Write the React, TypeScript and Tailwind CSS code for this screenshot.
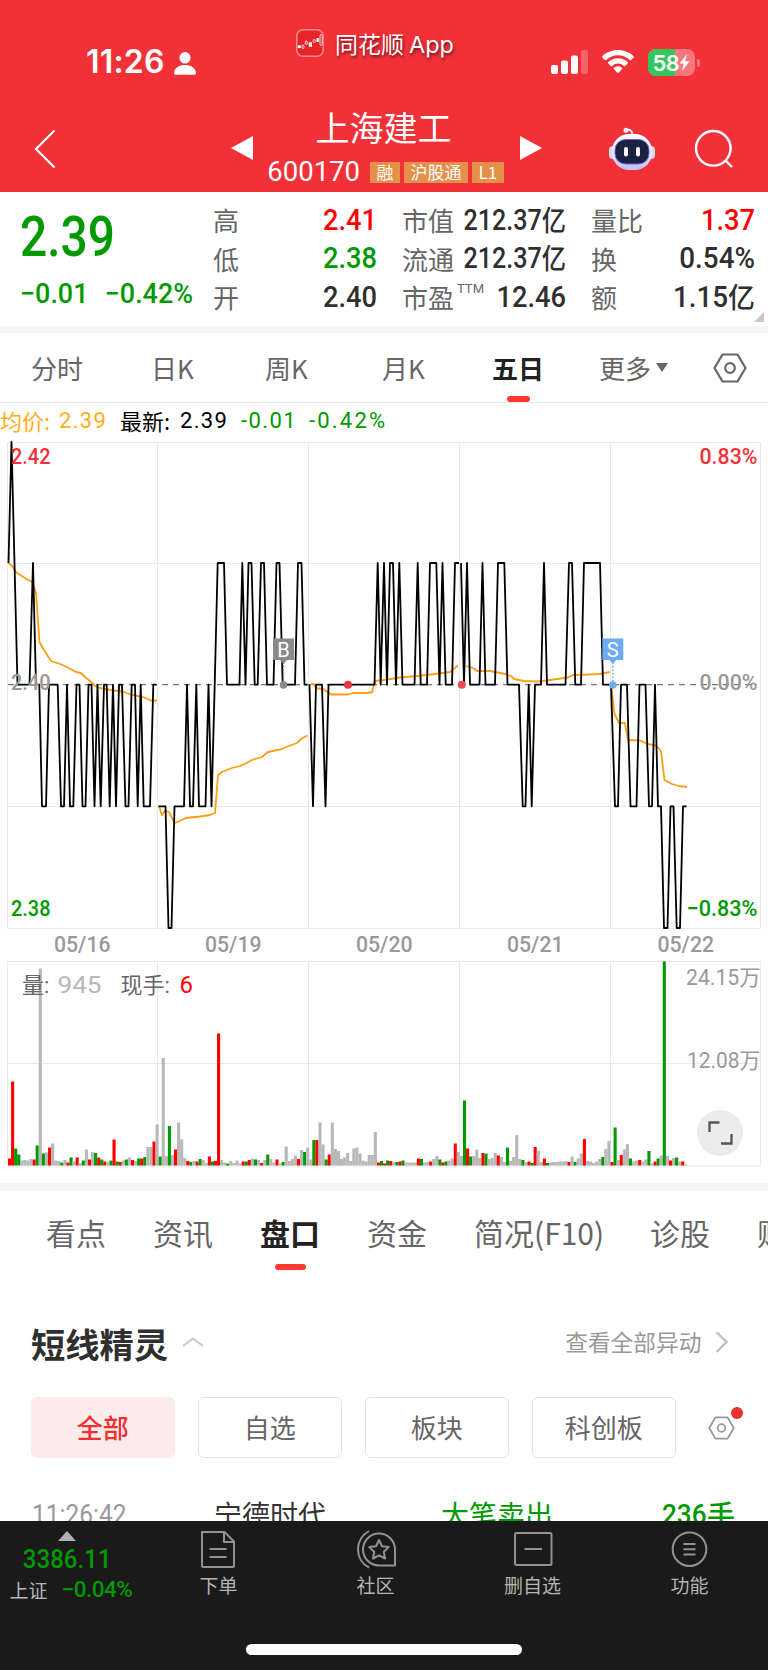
import type { ReactNode } from 'react';

type Point = [number, number];

// y position of each price gridline
const LEVELS: Record<string, number> = { a: 442, b: 563, c: 684.7, d: 806.3, e: 928 };

// each day: price level followed by x
const PRICE_DAYS = [
  'b8.5 a11.5 c17.5 c29.5 b33 c36 c39.3 d42 d46 c49 c57.7 d61 d64 c67 d70 d73.3 c76.5 c79.5 d82.5 d85.5 c88.5 c91.5 d94.5 c97.5 d100.7 c104 c106.7 d109.7 c113 d116 c119 c122 d125.5 d128.5 c131.7 c135 d137.7 c140.7 d143.7 d150 c153.3 c156.5',
  'd158.5 d165.5 e168.5 e171.5 d174.5 d184 c187 d190 d193 c196.3 d199 d205.5 c208.5 d211.5 c214.7 b217.7 b224 c227 c239.5 b242.3 c245.5 b248.5 b251.5 c254.7 c257.7 b261 b264 c267 c273.5 b276.5 b279.5 c282.7 c295 b298 b301.5 c304.5 c307.5',
  'c309.5 d313 c316 c322 d325.5 c328.5 c374.5 b377.7 c380.7 b384 c387 b390 b393 c396 b399.3 c402.5 c414.5 b417.7 c420.7 c427 b430 b436.3 c439.5 b442.5 c445.7 c452 b455 b459',
  'b461 c464 b467 c470 c479.5 b482.5 c485.5 c495 b498 b504.3 c507.5 c519 d522.7 d525.5 c528.7 d531.7 c535 c541 b544 c547 c565.5 b569 b572 c575.3 c581 b584 b600 c603 c611',
  'c611 d615 d618 c621 c627 d630.5 d636.5 c639.5 c645.5 d649 d652 c655 d658 d661 e664 e667.5 d670.5 d673.5 e676.7 e680 d683 d686.5',
];

const AVERAGE_DAYS = [
  '8.5,563 12,566 17,573 25,578 32,582 36,593 39.5,642 44,650 51,661 60,664 67,667 76,672 81,673 86,678 89,680 95,686 100,688 110,690 122,691.5 133,695 143,697 151,700.5 157,700.5',
  '159,806 162,815 165,811 169,812 172,818 175,823 186,818 200,816.5 210,815 215,813 218,775 222,772 227,770 232,768 240,766 247,763 252,760 262,757 268,752 282,749 286,747 297,743 301,739 307.5,735.5',
  '311,684 314,684 316,688 323,689 331,694.5 348,694.5 353,693 367,693 372,692 375,681 384,680 400,677.5 418,676 435,674 450,672 458,665.5',
  '466,666 474,668.5 477,671 490,671 505,674 511,676 514,679 524,681 538,681.5 550,680 568,677.5 573,675 590,674.5 600,674 610,672',
  '611,684 614.5,714 619,723 625,723 628,740 640,740.5 648,744 656,745.5 661,751 664.5,780 672,784 679,786 687,787',
];

// volume bars: r = up, g = down, n = flat, followed by the height
const VOLUMES =
  'r7 r84 g17 g11 n5 n5.5 n5 n6.5 r6 g20 n197 g12 n13 r18 n22 n5 n4.5 g3 n5.5 r3 g8 n4 r8 n2.5 g5 n16 r6 n13.5 g12.5 r8 g6 r4 n3.5 g5 r26 g4 r3.5 n5 g6 n8 r5.5 n4.5 g7 r7 g8.5 n18.5 n18.5 r24 n41 ' +
  'g9 n107.5 n9.5 g39.5 n10.5 r16 n43 n26 n7.5 r4.5 g3.5 n4.5 r4 g6.5 n5.5 n2.5 r9 g4 r4.5 r132 n5.5 n3 g2 n4.5 n2.5 n5 n2 r4 g4 r5.5 n7 g6 n5.5 r2.5 n5.5 g11 n6.5 n3 r6 n2 g3.5 n19 n4.5 n6.5 n10 r6.5 n15.5 g13.5 n18 ' +
  'n6 g25.5 r25.5 n43 n21 g6 r11 n43 n16.5 n14.5 n6.5 n8 n12.5 n4.5 n17 n18 n12 n5 n4 n10.5 n10.5 n33.5 r3 g4.5 r2 g5 r4.5 n3 g3.5 r4 g5 n3 n3 n3 n3 r7 g6.5 n3 n3.5 r4 n6.5 n9.5 g6 r3 g4 n5 n7 r22 n13.5 n9.5 ' +
  'g65 r17 g9 n9.5 n16 n7.5 r12.5 g12 n6.5 n7.5 n12.5 r10 n8.5 n3.5 g18 n4.5 n8.5 n30.5 n6.5 g5.5 n3.5 r4 g2.5 r18.5 n14.5 n3.5 r7 g2.5 n3 n3.5 n3.5 n4 n4 n4.5 r3.5 n9 g3.5 n7 n12 r26.5 n4.5 n4 n2.5 n4 n6.5 g8.5 n16.5 n24.5 ' +
  'r3.5 g38 n5.5 r10.5 n16 n21.5 g7 n4 n5 r5.5 n4 n6 g14.5 n2 r4 g7 n10 g204 n9.5 r5 n7.5 g8 n4 r4 n1';

const VOLUME_COLORS: Record<string, string> = { r: '#ff0000', g: '#009900', n: '#b8b8b8' };
const DAY_LINES = [157.5, 308.5, 459.5, 610.5];

const DATES = [
  { label: '05/16', x: 54 },
  { label: '05/19', x: 205 },
  { label: '05/20', x: 356 },
  { label: '05/21', x: 507 },
  { label: '05/22', x: 657.5 },
];

const parsePoint = (item: string): Point => [Number(item.slice(1)), LEVELS[item[0]]];

const Hexagon = ({ className }: { className: string }) => (
  <svg viewBox="0 0 34 30" className={className} fill="none" stroke="currentColor" strokeWidth="2.2" strokeLinejoin="round">
    <path d="M9.5 1.5h15L32.5 15l-8 13.5h-15L1.5 15z" />
    <circle cx="17" cy="15" r="4.8" />
  </svg>
);

const StatusBar = () => (
  <div className="flex h-[102px] text-white">
    <div className="flex w-[296px] items-start pl-[86px] pt-[46px]">
      <span className="w-[80px] font-[Inter] text-[32px] font-semibold leading-8 tracking-[0.2px]">11:26</span>
      <svg viewBox="0 0 22 23" className="ml-2 mt-[6px] h-[23px] w-[22px]" fill="currentColor">
        <ellipse cx="11" cy="5.8" rx="5.6" ry="5.8" />
        <path d="M0 20.5C1 15.5 5 13 11 13s10 2.5 11 7.5c0 1.5-.6 2.3-2 2.3H2c-1.4 0-2-.8-2-2.300z" />
      </svg>
    </div>
    <div className="flex w-[255px] items-start pt-[29px]">
      <svg viewBox="0 0 28 28" className="h-7 w-7">
        <rect x=".8" y=".8" width="26.4" height="26.4" rx="6" fill="#e8242b" stroke="#f58a8f" strokeWidth="1.5" />
        <g fill="#fff">
          <rect x="1.800" y="16.300" width="3" height="2.700" />
          <rect x="12.700" y="13.300" width="3.300" height="4.500" />
          <rect x="20.500" y="9" width="2.300" height="4" />
        </g>
        <g fill="none" stroke="#fff" strokeWidth=".8">
          <rect x="6" y="16" width="2" height="3.500" rx="1" />
          <rect x="9.200" y="12" width="2" height="3.500" rx="1" />
          <rect x="17.200" y="10.500" width="2" height="3" rx="1" />
          <rect x="24" y="5.500" width="2.200" height="11" rx="1" />
        </g>
      </svg>
      <span className="ml-[11px] text-[23px] leading-7 [text-shadow:1px_2px_3px_rgba(0,0,0,0.55)]">
        同花顺<span className="ml-[5px] font-[Inter] text-[23.5px]">App</span>
      </span>
    </div>
    <div className="flex items-start pt-[49px]">
      <svg viewBox="0 0 37 24" className="mt-[1px] h-6 w-[37px]" fill="currentColor">
        <rect x="0" y="15" width="7" height="9" rx="2" />
        <rect x="10" y="10.5" width="7" height="13.5" rx="2" />
        <rect x="20" y="5.5" width="7" height="18.5" rx="2" />
        <rect x="30" y="0" width="7" height="24" rx="2" opacity=".25" />
      </svg>
      <svg viewBox="0 0 32 24" className="ml-[14px] mt-[1px] h-6 w-8" fill="currentColor">
        <path d="M16 0c6 0 11.6 2.3 15.7 6.2.4.4.4.9 0 1.3l-2.5 2.5c-.4.4-.9.4-1.3 0C24.7 7 20.5 5.3 16 5.3S7.3 7 4.1 10c-.4.4-.9.4-1.3 0L.3 7.5c-.4-.4-.4-.9 0-1.3C4.4 2.3 10 0 16 0z" />
        <path d="M16 8.3c3.7 0 7.1 1.4 9.7 3.8.4.4.4.9 0 1.3l-2.5 2.5c-.4.4-.9.4-1.3 0a8.7 8.7 0 0 0-11.8 0c-.4.4-.9.4-1.3 0l-2.5-2.5c-.4-.4-.4-.9 0-1.3A14.3 14.3 0 0 1 16 8.3z" />
        <path d="M16 16.3c1.6 0 3 .6 4.1 1.5.4.4.4.9 0 1.3l-3.5 3.7c-.4.4-.8.4-1.2 0l-3.5-3.7c-.4-.4-.4-.9 0-1.3a6.3 6.3 0 0 1 4.1-1.5z" />
      </svg>
      <div className="relative ml-[14px] flex h-[27px] w-[47px] items-center justify-center overflow-hidden rounded-lg bg-[#f7777c]">
        <div className="absolute inset-y-0 left-0 w-[27px] bg-[#34c759]" />
        <span className="relative font-[Inter] text-[22px] font-semibold leading-none tracking-[-0.5px]">58</span>
        <svg viewBox="0 0 10 17" className="relative h-[17px] w-[11px]" fill="currentColor">
          <path d="M7.5 0 0 9.5h4.300L2.5 17 10 7.300H5.700z" />
        </svg>
      </div>
      <div className="ml-[2px] mt-[10px] h-2 w-[3px] rounded-r-full bg-[#f7777c]" />
    </div>
  </div>
);

const Robot = () => (
  <svg viewBox="0 0 46 44" className="h-[44px] w-[46px]">
    <defs>
      <linearGradient id="shell" x1="0" y1="0" x2="0" y2="1">
        <stop offset="0" stopColor="#ffffff" />
        <stop offset="0.6" stopColor="#e6e6fa" />
        <stop offset="1" stopColor="#bcbfee" />
      </linearGradient>
    </defs>
    <path d="M23 8c1-3-1-5-4-5.5" fill="none" stroke="#eceaff" strokeWidth="2" />
    <circle cx="17" cy="3.2" r="2.5" fill="#f3efff" />
    <rect x="0" y="19" width="8" height="13" rx="4" fill="#d5d7f6" />
    <rect x="38" y="19" width="8" height="13" rx="4" fill="#d5d7f6" />
    <rect x="3" y="7" width="40" height="36" rx="17" fill="url(#shell)" />
    <rect x="6" y="12.5" width="34" height="24.500" rx="10.5" fill="#1b2340" stroke="#6d5df0" strokeWidth="1" />
    <rect x="15" y="20" width="4" height="9.5" rx="2" fill="#fff" />
    <rect x="27" y="20" width="4" height="9.5" rx="2" fill="#fff" />
  </svg>
);

const Tag = ({ children }: { children: ReactNode }) => (
  <span className="flex h-[21px] items-center bg-[#e59049] px-[6.5px] pb-[2px] text-[17px] leading-none">{children}</span>
);

const TitleBar = () => (
  <div className="flex h-[90px] items-start text-white">
    <svg viewBox="0 0 22 40" className="ml-[34px] mt-[27px] h-10 w-[22px]" fill="none" stroke="currentColor" strokeWidth="2.2">
      <path d="M20.5 1.5 2 20l18.5 18.5" />
    </svg>
    <svg viewBox="0 0 22 24" className="ml-[175px] mt-[34px] h-6 w-[22px]" fill="currentColor">
      <path d="M22 0v24L0 12z" />
    </svg>
    <div className="-ml-[1px] mr-[1px] flex w-[267px] flex-col items-center">
      <h1 className="mr-[4px] mt-[5px] h-[44px] text-[34px] font-normal leading-[40px]">上海建工</h1>
      <div className="mt-[8px] flex h-[26px] items-center gap-1">
        <span className="mr-[6px] font-[Roboto] text-[27.5px] leading-none">600170</span>
        <Tag>融</Tag>
        <Tag>沪股通</Tag>
        <Tag>L1</Tag>
      </div>
    </div>
    <svg viewBox="0 0 22 24" className="mt-[34px] h-6 w-[22px]" fill="currentColor">
      <path d="M0 0v24l22-12z" />
    </svg>
    <div className="ml-[67px] mt-[25px]">
      <Robot />
    </div>
    <svg viewBox="0 0 40 40" className="ml-[39px] mt-[27px] h-10 w-10" fill="none" stroke="currentColor" strokeWidth="2.4">
      <circle cx="19.3" cy="19.300" r="17.3" />
      <path d="m31.5 31.5 6.500 6.500" />
    </svg>
  </div>
);

interface StatProps {
  label: ReactNode;
  value: string;
  unit?: string;
  tone?: string;
  stretch?: string;
}

const Stat = ({ label, value, unit, tone = 'text-[#2f2f2f]', stretch = 'scale-x-[0.94]' }: StatProps) => (
  <div className="flex h-[38.6px] items-center justify-between">
    <span className="shrink-0 whitespace-nowrap text-[26px] leading-none text-[#666]">{label}</span>
    <span className={`flex w-0 origin-right items-center justify-end whitespace-nowrap font-[Roboto] text-[29px] font-medium leading-none ${stretch} ${tone}`}>
      {value}
      {unit && <span className="-mt-[3px] font-['Noto_Sans_CJK_SC'] text-[28px] leading-none">{unit}</span>}
    </span>
  </div>
);

const QuotePanel = () => (
  <section className="relative flex h-[134px] shrink-0 pt-[9px]">
    <div className="w-[213px] pl-[20px] font-[Roboto] font-medium text-[#009900]">
      <div className="mt-[9px] h-[65px] origin-left scale-x-[0.87] text-[55px] leading-[54px]">2.39</div>
      <div className="flex w-[200px] origin-left scale-x-[0.96] gap-[17px] whitespace-nowrap text-[28px] leading-[37px]">
        <span>−0.01</span>
        <span>−0.42%</span>
      </div>
    </div>
    <div className="w-[164px]">
      <Stat label="高" value="2.41" tone="text-[#ff0000]" />
      <Stat label="低" value="2.38" tone="text-[#009900]" />
      <Stat label="开" value="2.40" />
    </div>
    <div className="ml-[25px] w-[164px]">
      <Stat label="市值" value="212.37" unit="亿" stretch="scale-x-[0.865]" />
      <Stat label="流通" value="212.37" unit="亿" stretch="scale-x-[0.865]" />
      <Stat
        label={
          <span className="flex">
            市盈<span className="-mt-[2px] ml-[3px] font-[Roboto] text-[13px] leading-none">TTM</span>
          </span>
        }
        value="12.46"
      />
    </div>
    <div className="ml-[25px] w-[164px]">
      <Stat label="量比" value="1.37" tone="text-[#ff0000]" />
      <Stat label="换" value="0.54%" stretch="scale-x-[0.96]" />
      <Stat label="额" value="1.15" unit="亿" stretch="scale-x-[0.96]" />
    </div>
    <svg viewBox="0 0 10 10" className="absolute bottom-1 right-1 h-[10px] w-[10px]" fill="#c8c8c8">
      <path d="M10 0v10H0z" />
    </svg>
  </section>
);

const PeriodTabs = () => (
  <nav className="flex h-[70px] shrink-0 items-center border-b border-[#e8e8e8] text-[26px] leading-none text-[#666]">
    <span className="ml-[31px] w-[120px]">分时</span>
    <span className="w-[114px]">日K</span>
    <span className="w-[117px]">周K</span>
    <span className="w-[110px]">月K</span>
    <span className="relative w-[107px] font-bold text-[#222]">
      五日
      <span className="absolute -bottom-[21px] left-[15px] h-[6px] w-[23px] rounded-[3px] bg-[#fd3a32]" />
    </span>
    <span className="w-[57px]">更多</span>
    <svg viewBox="0 0 12 9" className="h-[9px] w-3" fill="currentColor">
      <path d="M0 0h12L6 9z" />
    </svg>
    <Hexagon className="ml-[45px] h-[30px] w-[34px]" />
  </nav>
);

const PriceLegend = () => (
  <div className="flex h-[36px] shrink-0 items-center whitespace-nowrap text-[22px] leading-none text-black">
    <span className="-mt-[2px] w-[59px] text-[#ffae17]">均价:</span>
    <span className="w-[61px] font-[Roboto] tracking-[1.3px] text-[#ffae17]">2.39</span>
    <span className="-mt-[2px] w-[60px]">最新:</span>
    <span className="w-[61px] font-[Roboto] tracking-[1.3px]">2.39</span>
    <span className="w-[68px] font-[Roboto] tracking-[1.4px] text-[#009900]">-0.01</span>
    <span className="font-[Roboto] tracking-[2.2px] text-[#009900]">-0.42%</span>
  </div>
);

interface FlagProps {
  x: number;
  color: string;
  letter: string;
}

const Flag = ({ x, color, letter }: FlagProps) => (
  <g>
    <path d={`M${x} 662V682`} stroke={color} strokeWidth="1.5" strokeDasharray="1.8 1.8" />
    <path d={`M${x - 10.5} 638.5h21v21.5h-7l-3.5 4-3.5-4h-7z`} fill={color} />
    <circle cx={x} cy="685" r="3.8" fill={color} />
    <text x={x} y="656.5" textAnchor="middle" fontSize="20" fill="#fff">
      {letter}
    </text>
  </g>
);

const Charts = () => (
  <svg viewBox="0 439 768 744" className="block h-[744px] w-[768px] shrink-0 font-[Roboto,'Noto_Sans_CJK_SC']" fontSize="22">
    {/* Grid */}
    <g stroke="#e9e9e9" strokeWidth="1" fill="none">
      <rect x="7.5" y="442.5" width="753" height="486" />
      <path d="M8 563.5H760M8 806.5H760" />
      <rect x="7.5" y="961.5" width="753" height="204.5" />
      <path d="M8 1063.5H760" />
      {DAY_LINES.map(x => (
        <path key={x} d={`M${x} 442V928M${x} 961V1166`} />
      ))}
    </g>
    <path d="M8 684.7H757" stroke="#777" strokeWidth="1.2" strokeDasharray="6 5" />

    {/* Price lines */}
    <g fill="none" strokeWidth="1.8" strokeLinejoin="round">
      {AVERAGE_DAYS.map(points => (
        <polyline key={points} points={points} stroke="#ff9d14" />
      ))}
      {PRICE_DAYS.map(day => (
        <polyline key={day} points={day.split(' ').map(parsePoint).join(' ')} stroke="#000" />
      ))}
    </g>

    <Flag x={283.5} color="#8a8a8a" letter="B" />
    <Flag x={612.8} color="#6fabf4" letter="S" />
    <circle cx="348" cy="684.7" r="4" fill="#e03a40" />
    <circle cx="461.8" cy="684.7" r="4" fill="#f04a50" />

    {/* Axis labels */}
    <g fontWeight="500">
      <text x="11" y="463.8" textLength="39.5" lengthAdjust="spacingAndGlyphs" fill="#f23037">2.42</text>
      <text x="11" y="689.8" textLength="39.5" lengthAdjust="spacingAndGlyphs" fill="#999">2.40</text>
      <text x="11" y="915.8" textLength="39.5" lengthAdjust="spacingAndGlyphs" fill="#009900">2.38</text>
      <text x="699.5" y="463.8" textLength="58" lengthAdjust="spacingAndGlyphs" fill="#f23037">0.83%</text>
      <text x="699.5" y="689.8" textLength="58" lengthAdjust="spacingAndGlyphs" fill="#999">0.00%</text>
      <text x="686.5" y="915.8" textLength="71" lengthAdjust="spacingAndGlyphs" fill="#009900">−0.83%</text>
    </g>
    <g fill="#999" fontWeight="500">
      {DATES.map(date => (
        <text key={date.label} x={date.x} y="951.8" textLength="56.5" lengthAdjust="spacingAndGlyphs">
          {date.label}
        </text>
      ))}
    </g>

    {/* Volume */}
    {VOLUMES.split(' ').map((bar, index) => {
      const height = Number(bar.slice(1));
      return <rect key={index} x={8 + index * 3.074} y={1165.5 - height} width="3.1" height={height} fill={VOLUME_COLORS[bar[0]]} />;
    })}
    <g fill="#666">
      <text x="22" y="993">量:</text>
      <text x="57.5" y="993" fontSize="23" textLength="44" lengthAdjust="spacingAndGlyphs" fill="#b8b8b8">945</text>
      <text x="120.5" y="993">现手:</text>
      <text x="179.5" y="993" fontSize="24" fill="#ff0000">6</text>
    </g>
    <g fill="#999">
      <text x="686" y="985" textLength="74.5" lengthAdjust="spacingAndGlyphs">24.15万</text>
      <text x="687" y="1068" textLength="73.5" lengthAdjust="spacingAndGlyphs">12.08万</text>
    </g>
    <circle cx="720" cy="1133" r="23" fill="#ececec" />
    <path d="M709.5 1132v-9.5h10M731.5 1134v9.5h-10.5" fill="none" stroke="#555" strokeWidth="2.3" />
  </svg>
);

const InfoTabs = () => (
  <nav className="flex h-[84px] shrink-0 items-center overflow-hidden whitespace-nowrap pb-[3px] pl-[46px] text-[30px] leading-none text-[#666]">
    <span className="w-[107px] shrink-0">看点</span>
    <span className="w-[107px] shrink-0">资讯</span>
    <span className="relative w-[107px] shrink-0 font-bold text-[#222]">
      盘口
      <span className="absolute -bottom-[23px] left-[15px] h-[6px] w-[31px] rounded-[3px] bg-[#fd3a32]" />
    </span>
    <span className="w-[107px] shrink-0">资金</span>
    <span className="w-[176px] shrink-0">简况(F10)</span>
    <span className="w-[107px] shrink-0">诊股</span>
    <span className="shrink-0">财务</span>
  </nav>
);

const FILTERS = ['全部', '自选', '板块', '科创板'];

const ShortTermAlerts = () => (
  <section className="h-[246px] shrink-0 overflow-hidden">
    <div className="mt-[44px] flex h-[46px] items-center pl-[31px]">
      <h2 className="mt-[2px] text-[34.3px] font-bold leading-none text-[#2f2f2f]">短线精灵</h2>
      <svg viewBox="0 0 22 10" className="ml-[14px] h-[10px] w-[22px]" fill="none" stroke="#c8c8c8" strokeWidth="2">
        <path d="M1 9 11 1.5 21 9" />
      </svg>
      <span className="ml-[361px] text-[22.7px] leading-none text-[#999]">查看全部异动</span>
      <svg viewBox="0 0 13 22" className="ml-[14px] h-[22px] w-[13px]" fill="none" stroke="#c0c0c0" strokeWidth="2.4">
        <path d="m1.5 1 10 10-10 10" />
      </svg>
    </div>
    <div className="mt-[32px] flex h-[61px] items-center gap-[23.5px] pl-[31px]">
      {FILTERS.map((filter, index) => (
        <button
          key={filter}
          className={`h-[61px] w-[143.5px] rounded-md pb-[2px] text-[26px] leading-none ${
            index === 0 ? 'bg-[#fdeaea] font-medium text-[#f0302f]' : 'border border-[#e3e3e3] text-[#666]'
          }`}
        >
          {filter}
        </button>
      ))}
      <div className="relative ml-[9px]">
        <Hexagon className="h-6 w-[27px] text-[#999]" />
        <span className="absolute -right-[8px] -top-[9px] h-[12px] w-[12px] rounded-full bg-[#eb3032]" />
      </div>
    </div>
    <div className="mt-[40px] flex whitespace-nowrap pl-8 text-[28px] leading-[32px]">
      <span className="w-[182px] font-[Roboto] text-[#999]">
        <span className="block origin-left scale-x-[0.89] text-[27.5px] leading-[34px]">11:26:42</span>
      </span>
      <span className="w-[227px] text-[#333]">宁德时代</span>
      <span className="w-[221px] text-[#009900]">大笔卖出</span>
      <span className="flex font-medium text-[#009900]">
        <span className="w-[45px] origin-left scale-x-[0.95] font-[Roboto] text-[27.5px] leading-[34px]">236</span>手
      </span>
    </div>
  </section>
);

const NAV_ITEMS = [
  {
    label: '下单',
    icon: (
      <>
        <path d="M3 3h22.500L35 12.500v24a1.500 1.500 0 0 1-1.500 1.500h-29A1.500 1.500 0 0 1 3 36.500z" />
        <path d="M25 3v10h10M10.500 20h17M10.500 28h17" />
      </>
    ),
  },
  {
    label: '社区',
    icon: (
      <>
        <path d="M13 2C6 6 2 13 2 20.5S6 35 13 38.5" />
        <path d="M39 36.5H23A16 16 0 1 1 39 20.5z" />
        <path d="m23 11 3 6.200 6.700.9-4.900 4.700 1.200 6.700-6-3.200-6 3.200 1.200-6.700-4.900-4.700 6.700-.9z" />
      </>
    ),
  },
  {
    label: '删自选',
    icon: (
      <>
        <rect x="2" y="4" width="36.5" height="32" rx="1.5" />
        <path d="M11.5 20h17.500" />
      </>
    ),
  },
  {
    label: '功能',
    icon: (
      <>
        <circle cx="19.500" cy="20.200" r="16.8" />
        <path d="M13.500 15h12M13.500 20.2h12M13.500 25.500h12" />
      </>
    ),
  },
];

const BottomNav = () => (
  <footer className="flex h-[149px] shrink-0 flex-col items-center bg-[#1a1a1a]">
    <div className="flex h-[123px] w-full">
      <div className="flex w-[140px] flex-col items-center pt-[10px] text-[#009900]">
        <svg viewBox="0 0 18 10" className="mr-[6px] h-[10px] w-[18px]" fill="#b0b0b0">
          <path d="M9 0l9 10H0z" />
        </svg>
        <span className="mr-[6px] mt-[6px] scale-x-[0.96] font-[Roboto] text-[25px] font-medium leading-[26px]">3386.11</span>
        <span className="ml-[2px] mt-[5px] flex items-center gap-[14px] whitespace-nowrap">
          <span className="text-[19px] leading-none text-[#b5b5b5]">上证</span>
          <span className="font-[Roboto] text-[22.500px] font-medium leading-none tracking-[-0.5px]">−0.04%</span>
        </span>
      </div>
      {NAV_ITEMS.map(item => (
        <div key={item.label} className="flex flex-1 flex-col items-center pt-[8px] text-[#b5b5b5]">
          <svg viewBox="0 0 40 40" className="h-10 w-10" fill="none" stroke="#929292" strokeWidth="2" strokeLinejoin="round">
            {item.icon}
          </svg>
          <span className="mt-[6px] text-[19px] leading-none">{item.label}</span>
        </div>
      ))}
    </div>
    <div className="h-[11px] w-[276px] rounded-full bg-white" />
  </footer>
);

export default function App() {
  return (
    <div className="flex h-[1670px] w-[768px] flex-col overflow-hidden bg-white font-['Noto_Sans_CJK_SC',sans-serif]">
      <header className="h-[192px] shrink-0 bg-[#f23038]">
        <StatusBar />
        <TitleBar />
      </header>
      <QuotePanel />
      <div className="h-[7px] shrink-0 bg-[#f5f5f5]" />
      <PeriodTabs />
      <PriceLegend />
      <Charts />
      <div className="h-2 shrink-0 bg-[#f5f5f5]" />
      <InfoTabs />
      <ShortTermAlerts />
      <BottomNav />
    </div>
  );
}
